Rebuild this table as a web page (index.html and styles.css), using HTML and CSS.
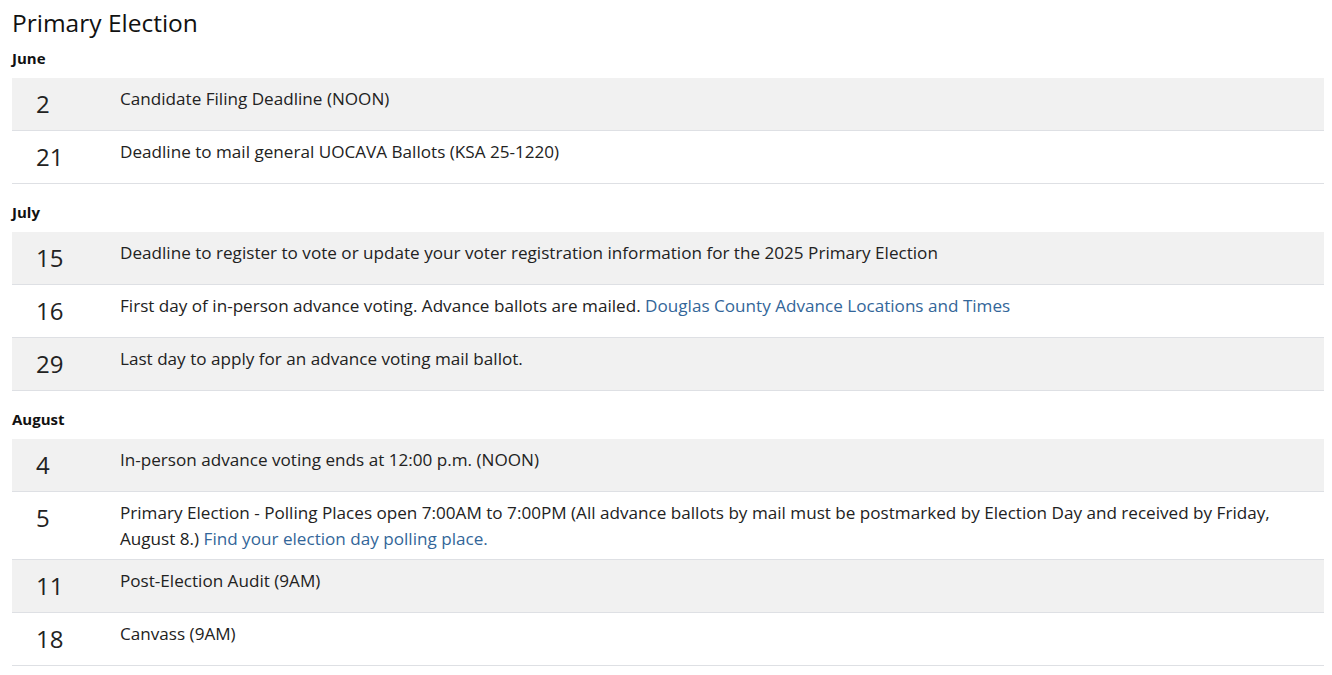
FILE: index.html
```html
<!DOCTYPE html>
<html lang="en">
<head>
<meta charset="utf-8">
<title>Primary Election</title>
<link rel="stylesheet" href="styles.css">
</head>
<body>
<div class="page">
  <h2 class="title">Primary Election</h2>

  <h3 class="month">June</h3>
  <table class="dates">
    <tr><td class="day">2</td><td class="event">Candidate Filing Deadline (NOON)</td></tr>
    <tr><td class="day">21</td><td class="event">Deadline to mail general UOCAVA Ballots (KSA 25-1220)</td></tr>
  </table>

  <h3 class="month">July</h3>
  <table class="dates">
    <tr><td class="day">15</td><td class="event">Deadline to register to vote or update your voter registration information for the 2025 Primary Election</td></tr>
    <tr><td class="day">16</td><td class="event">First day of in-person advance voting. Advance ballots are mailed. <a href="#">Douglas County Advance Locations and Times</a></td></tr>
    <tr><td class="day">29</td><td class="event">Last day to apply for an advance voting mail ballot.</td></tr>
  </table>

  <h3 class="month">August</h3>
  <table class="dates">
    <tr><td class="day">4</td><td class="event">In-person advance voting ends at 12:00 p.m. (NOON)</td></tr>
    <tr><td class="day">5</td><td class="event">Primary Election - Polling Places open 7:00AM to 7:00PM (All advance ballots by mail must be postmarked by Election Day and received by Friday, August 8.) <a href="#">Find your election day polling place.</a></td></tr>
    <tr><td class="day">11</td><td class="event">Post-Election Audit (9AM)</td></tr>
    <tr><td class="day">18</td><td class="event">Canvass (9AM)</td></tr>
  </table>
</div>
</body>
</html>
```

FILE: styles.css
```css
html, body {
  margin: 0;
  padding: 0;
  background: #ffffff;
}

body {
  font-family: "Open Sans", "Liberation Sans", sans-serif;
  color: #222222;
}

.page {
  padding: 8px 8px 0 12px;
}

.title {
  margin: 0;
  font-size: 24.5px;
  line-height: 29px;
  font-weight: 400;
  color: #111111;
}

.month {
  margin: 11px 0 10px 0;
  font-size: 15px;
  line-height: 20px;
  font-weight: 700;
  color: #111111;
}

.dates + .month {
  margin-top: 18px;
}

.dates {
  width: 100%;
  table-layout: fixed;
  border-collapse: collapse;
  border-spacing: 0;
}

.dates tr {
  border-bottom: 1px solid #dee0e4;
}

.dates tr:nth-child(odd) {
  background: #f1f1f1;
}

.dates td {
  vertical-align: top;
  padding: 8px;
}

.dates td.day {
  width: 68px;
  padding-left: 24px;
  font-size: 24px;
  line-height: 36px;
  color: #222222;
}

.event {
  font-size: 17.13px;
  line-height: 25.5px;
  color: #222222;
}

.event a {
  color: #336699;
  text-decoration: none;
}
```
